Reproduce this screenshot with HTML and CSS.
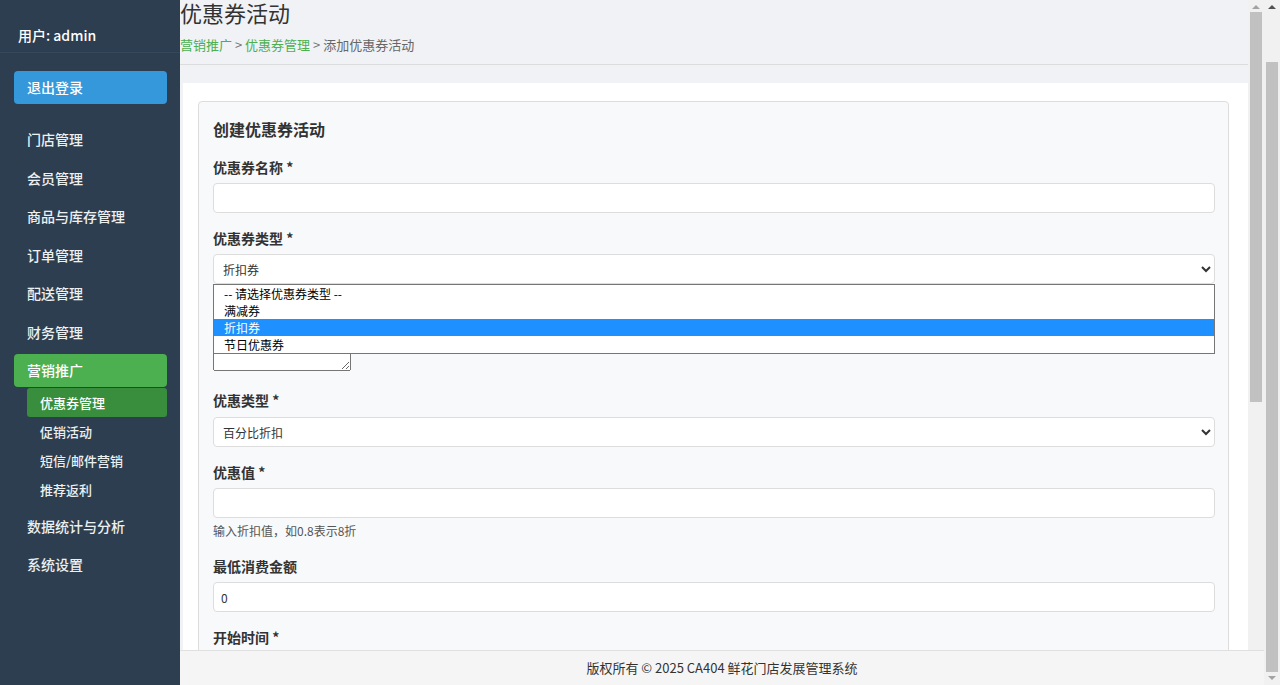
FILE: index.html
```html
<!DOCTYPE html>
<html lang="zh-CN">
<head>
    <meta charset="UTF-8">
    <meta name="viewport" content="width=device-width, initial-scale=1.0">
    <title>添加优惠券活动 - 鲜花门店发展管理系统</title>
    <link rel="stylesheet" href="styles.css">
</head>
<body>
    <div class="layout">
        <!-- 侧边栏 -->
        <aside class="sidebar">
            <div class="user-info">用户: admin</div>
            <a href="#" class="logout-btn">退出登录</a>
            <ul class="menu">
                <li><a href="#">门店管理</a></li>
                <li><a href="#">会员管理</a></li>
                <li><a href="#">商品与库存管理</a></li>
                <li><a href="#">订单管理</a></li>
                <li><a href="#">配送管理</a></li>
                <li><a href="#">财务管理</a></li>
                <li class="open">
                    <a href="#" class="active">营销推广</a>
                    <ul class="submenu">
                        <li><a href="#" class="active">优惠券管理</a></li>
                        <li><a href="#">促销活动</a></li>
                        <li><a href="#">短信/邮件营销</a></li>
                        <li><a href="#">推荐返利</a></li>
                    </ul>
                </li>
                <li><a href="#">数据统计与分析</a></li>
                <li><a href="#">系统设置</a></li>
            </ul>
        </aside>

        <!-- 主内容 -->
        <main class="main">
            <div class="page-header">
                <h1>优惠券活动</h1>
                <div class="breadcrumb">
                    <a href="#">营销推广</a> <span class="sep">&gt;</span>
                    <a href="#">优惠券管理</a> <span class="sep">&gt;</span>
                    <span>添加优惠券活动</span>
                </div>
            </div>

            <div class="content">
                <div class="card">
                    <h2>创建优惠券活动</h2>
                    <form>
                        <div class="form-group">
                            <label>优惠券名称 *</label>
                            <input type="text" class="form-control">
                        </div>
                        <div class="form-group has-dropdown">
                            <label>优惠券类型 *</label>
                            <select class="form-control">
                                <option>-- 请选择优惠券类型 --</option>
                                <option>满减券</option>
                                <option selected>折扣券</option>
                                <option>节日优惠券</option>
                            </select>
                            <!-- 展开的下拉列表 -->
                            <div class="dropdown-list">
                                <div class="dropdown-item">-- 请选择优惠券类型 --</div>
                                <div class="dropdown-item">满减券</div>
                                <div class="dropdown-item selected">折扣券</div>
                                <div class="dropdown-item">节日优惠券</div>
                            </div>
                        </div>
                        <div class="form-group desc-group">
                            <label>优惠券描述</label>
                            <textarea class="desc"></textarea>
                        </div>
                        <div class="form-group">
                            <label class="tall">优惠类型 *</label>
                            <select class="form-control">
                                <option>百分比折扣</option>
                                <option>固定金额</option>
                            </select>
                        </div>
                        <div class="form-group">
                            <label>优惠值 *</label>
                            <input type="text" class="form-control">
                            <div class="help">输入折扣值，如0.8表示8折</div>
                        </div>
                        <div class="form-group">
                            <label>最低消费金额</label>
                            <input type="text" class="form-control" value="0">
                        </div>
                        <div class="form-group">
                            <label>开始时间 *</label>
                            <input type="text" class="form-control">
                        </div>
                        <div class="form-group">
                            <label>结束时间 *</label>
                            <input type="text" class="form-control">
                        </div>
                        <div class="form-actions">
                            <button type="submit" class="btn btn-primary">保存</button>
                            <button type="button" class="btn">取消</button>
                        </div>
                    </form>
                </div>
            </div>
        </main>

        <!-- 滚动条 (内容区 / 页面) -->
        <div class="scrollbar inner">
            <span class="arrow up light"></span>
            <span class="thumb"></span>
        </div>
        <div class="scrollbar outer">
            <span class="arrow up"></span>
            <span class="thumb"></span>
            <span class="arrow down light"></span>
        </div>
    </div>

    <footer class="footer">版权所有 &copy; 2025 CA404 鲜花门店发展管理系统</footer>
</body>
</html>
```

FILE: styles.css
```css
body {
    margin: 0;
    padding: 0;
    height: 100vh;
    overflow: hidden;
    font-family: "Noto Sans CJK SC", "Noto Sans", sans-serif;
    font-size: 14px;
    color: #333;
    background-color: #f0f2f5;
}
a {
    text-decoration: none;
}
.layout {
    display: flex;
    height: 100vh;
}

/* 侧边栏 */
.sidebar {
    width: 180px;
    flex-shrink: 0;
    background-color: #2c3e50;
    color: #ffffff;
}
.user-info {
    padding: 25px 18px 7px;
    line-height: 20px;
    font-weight: 500;
    border-bottom: 1px solid #34495e;
}
.logout-btn {
    display: block;
    margin: 18px 13px 0 14px;
    height: 33px;
    line-height: 33px;
    padding-left: 13px;
    background-color: #3498db;
    color: #ffffff;
    border-radius: 4px;
    font-weight: 500;
}
.menu, .submenu {
    list-style: none;
    margin: 0;
    padding: 0;
}
.menu {
    margin-top: 19px;
}
.menu > li {
    margin-bottom: 5.5px;
}
.menu > li > a {
    display: block;
    margin: 0 13px 0 14px;
    height: 33px;
    line-height: 33px;
    padding-left: 13px;
    color: #ecf0f1;
    border-radius: 4px;
    font-weight: 500;
}
.menu > li > a.active {
    background-color: #4caf50;
    color: #ffffff;
}
.submenu {
    margin-top: 1px;
    margin-left: 27px;
    margin-right: 13px;
}
.submenu a {
    display: block;
    height: 29px;
    line-height: 29px;
    padding-left: 13px;
    font-size: 13px;
    color: #ecf0f1;
    font-weight: 500;
    border-radius: 3px;
}
.submenu a.active {
    background-color: #388e3c;
    color: #ffffff;
}

/* 主内容 */
.main {
    flex: 1;
    min-width: 0;
    overflow: hidden;
    background-color: #f0f2f5;
}
.page-header {
    padding: 0 0 9px;
    border-bottom: 1px solid #dcdcdc;
}
.page-header h1 {
    margin: 0;
    font-size: 22px;
    line-height: 24px;
    font-weight: normal;
    color: #333;
}
.breadcrumb {
    margin-top: 11px;
    font-size: 13px;
    line-height: 20px;
    color: #666;
}
.breadcrumb a {
    color: #4caf50;
}
.breadcrumb .sep {
    color: #777;
}
.content {
    margin: 18px 0 0 3px;
    padding: 18px 19px 60px 15px;
    background-color: #ffffff;
}
.card {
    background-color: #f8f9fa;
    border: 1px solid #dddddd;
    border-radius: 4px;
    padding: 16px 13px 20px 14px;
}
.card h2 {
    margin: 0 0 17px;
    font-size: 16px;
    line-height: 22px;
    font-weight: bold;
    color: #333;
}
.form-group {
    margin-bottom: 15px;
}
.form-group label {
    display: block;
    font-weight: bold;
    font-size: 14px;
    line-height: 20px;
    margin-bottom: 6px;
    color: #333;
}
.form-group label.tall {
    margin-bottom: 7px;
}
.form-control {
    display: block;
    width: 100%;
    box-sizing: border-box;
    height: 30px;
    padding: 0 7px;
    font-family: inherit;
    font-size: 12px;
    color: #333;
    background-color: #ffffff;
    border: 1px solid #dddddd;
    border-radius: 4px;
}
select.form-control {
    padding: 0 5px;
}
.help {
    margin-top: 5px;
    padding-bottom: 2px;
    font-size: 12px;
    line-height: 16px;
    color: #555;
}
.desc-group {
    padding-bottom: 4px;
}
.desc {
    display: block;
    width: 138px;
    height: 46px;
    box-sizing: border-box;
}
.has-dropdown {
    position: relative;
}
.dropdown-list {
    position: absolute;
    top: 100%;
    left: 0;
    right: 0;
    z-index: 5;
    background-color: #ffffff;
    border: 1px solid #767676;
    font-size: 12px;
    line-height: 17px;
    color: #000;
}
.dropdown-item {
    padding-left: 10px;
}
.dropdown-item.selected {
    background-color: #1e90ff;
    color: #ffffff;
}
.form-actions {
    display: flex;
    gap: 10px;
}
.btn {
    padding: 7px 18px;
    font-family: inherit;
    font-size: 14px;
    border: 1px solid #dddddd;
    border-radius: 4px;
    background-color: #ffffff;
    color: #333;
}
.btn-primary {
    background-color: #4caf50;
    border-color: #4caf50;
    color: #ffffff;
}

/* 滚动条 */
.scrollbar {
    width: 16px;
    flex-shrink: 0;
    display: flex;
    flex-direction: column;
    align-items: center;
    background-color: #f1f1f1;
}
.scrollbar .thumb {
    width: 12px;
    background-color: #c1c1c1;
}
.scrollbar .arrow {
    width: 0;
    height: 0;
    border-left: 4px solid transparent;
    border-right: 4px solid transparent;
}
.arrow.up {
    margin: 5px 0 3px;
    border-bottom: 4px solid #505050;
}
.arrow.down {
    margin: 4px 0 5px;
    border-top: 4px solid #505050;
}
.arrow.up.light {
    border-bottom-color: #a3a3a3;
}
.arrow.down.light {
    border-top-color: #a3a3a3;
}
.inner .thumb {
    height: 390px;
}
.outer .thumb {
    margin-top: 50px;
    flex: 1;
}

/* 页脚 */
.footer {
    position: fixed;
    left: 180px;
    right: 16px;
    bottom: 0;
    height: 34px;
    line-height: 34px;
    text-align: center;
    font-size: 13px;
    color: #333;
    background-color: #f5f5f5;
    border-top: 1px solid #e0e0e0;
    z-index: 10;
}
```
